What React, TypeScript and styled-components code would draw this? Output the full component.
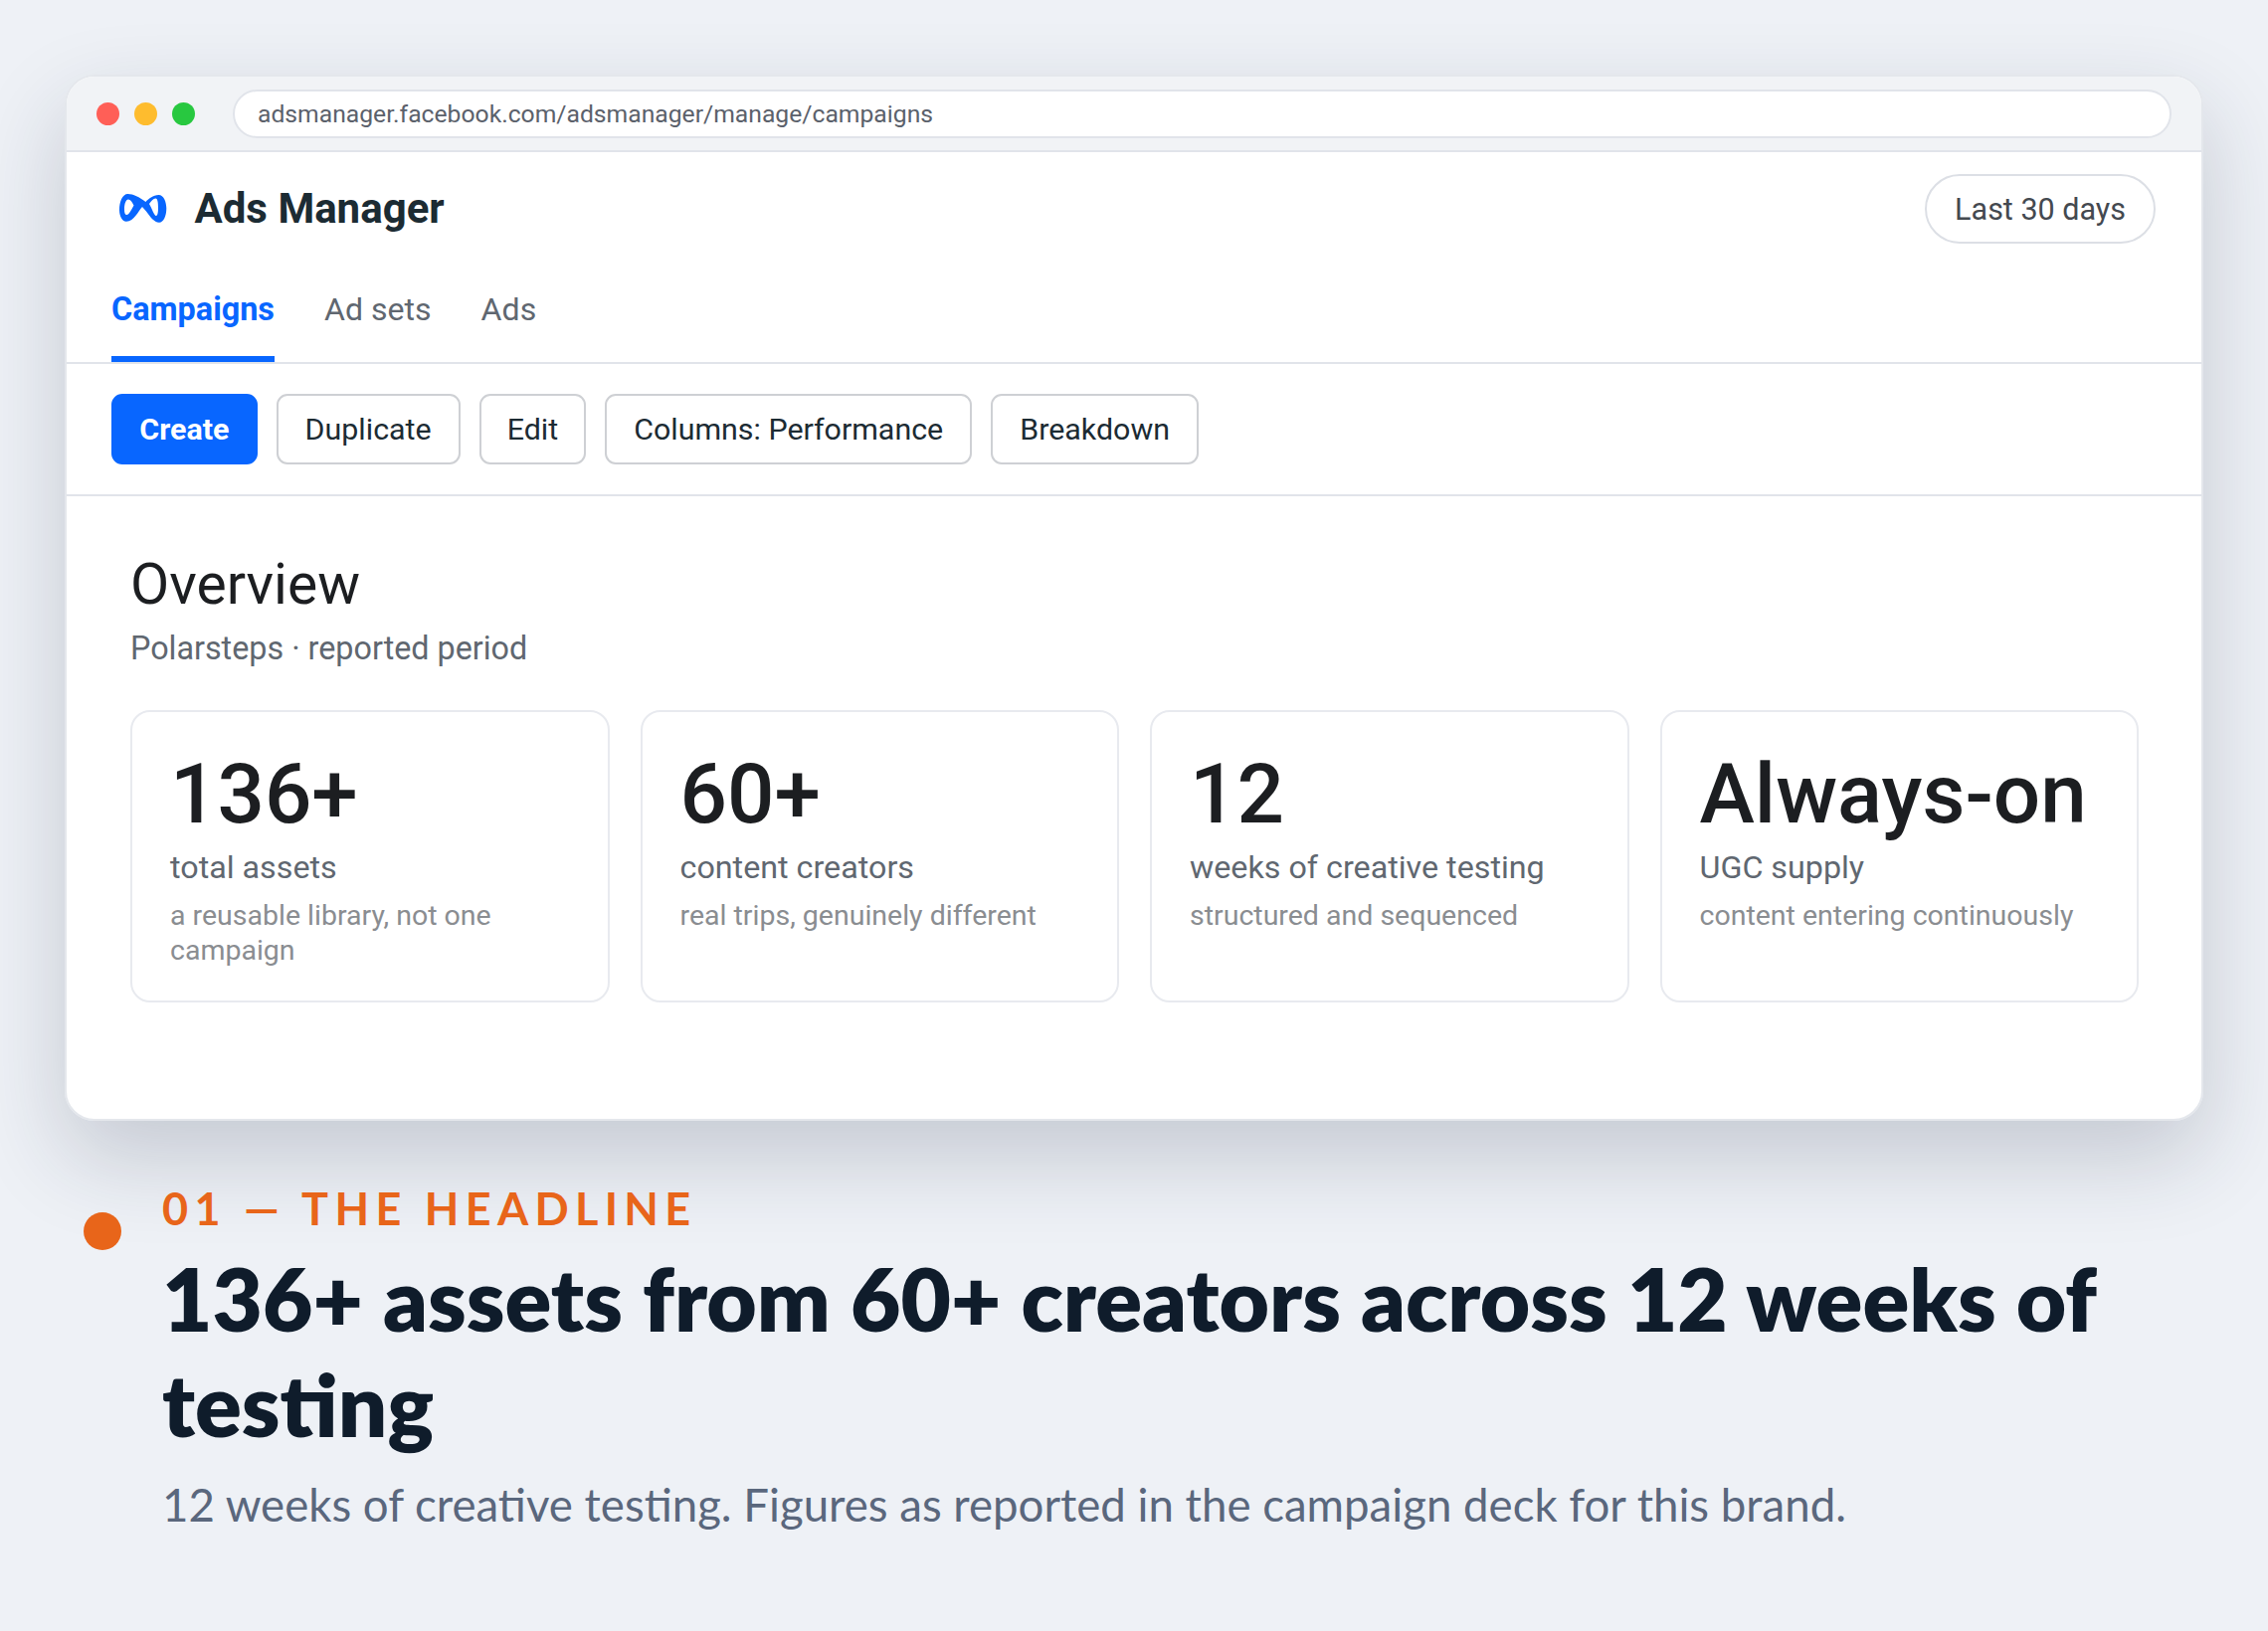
import React from "react";
import styled, { createGlobalStyle } from "styled-components";

const Global = createGlobalStyle`
  html, body { margin: 0; padding: 0; background: #eef1f6; }
  body { width: 2280px; height: 1640px; overflow: hidden; font-family: "Roboto", "Liberation Sans", sans-serif; }
  * { box-sizing: border-box; }
`;

const Page = styled.main`
  width: 2280px;
  height: 1640px;
  padding: 75px 65px 0;
  display: flex;
  flex-direction: column;
  background: #eef1f6;
`;

const Browser = styled.section`
  height: 1052px;
  background: #fff;
  border: 2px solid #e4e7ec;
  border-radius: 30px;
  overflow: hidden;
  display: flex;
  flex-direction: column;
`;

const BrowserFrame = styled.div`
  border-radius: 30px;
  box-shadow: 0 36px 90px rgba(30, 41, 66, 0.2);
`;

const ChromeBar = styled.div`
  height: 76px;
  flex: none;
  background: #f1f3f6;
  border-bottom: 2px solid #e1e4ea;
  display: flex;
  align-items: center;
  padding: 1px 30px 0;
`;

const Dots = styled.div`
  display: flex;
  gap: 15px;
  margin-right: 38px;
`;

const Dot = styled.span<{ $c: string }>`
  width: 23px;
  height: 23px;
  border-radius: 50%;
  background: ${(p) => p.$c};
`;

const UrlBar = styled.div`
  flex: 1;
  height: 49px;
  background: #fff;
  border: 2px solid #e1e4ea;
  border-radius: 25px;
  display: flex;
  align-items: center;
  padding: 0 23px;
  font-size: 24.7px;
  color: #5b616b;
`;

const Header = styled.header`
  height: 80px;
  margin-top: 17px;
  flex: none;
  display: flex;
  align-items: center;
  justify-content: space-between;
  padding: 0 46px 0 45px;
`;

const Brand = styled.div`
  display: flex;
  align-items: center;
  gap: 27.5px;
  padding: 0 0 2px 7px;
  font-size: 42px;
  font-weight: 700;
  color: #1c2b33;
`;

const RangePill = styled.div`
  height: 70px;
  padding: 0 28px;
  border: 2px solid #dcdfe5;
  border-radius: 35px;
  display: flex;
  align-items: center;
  font-size: 30.5px;
  color: #444950;
`;

const Tabs = styled.nav`
  height: 116px;
  flex: none;
  display: flex;
  gap: 50px;
  padding: 0 45px;
  border-bottom: 2px solid #e1e4ea;
`;

const Tab = styled.a<{ $active?: boolean }>`
  height: 100%;
  display: flex;
  align-items: center;
  padding-top: 14px;
  font-size: ${(p) => (p.$active ? "32.4px" : "32.1px")};
  font-weight: ${(p) => (p.$active ? 700 : 400)};
  color: ${(p) => (p.$active ? "#0866ff" : "#606770")};
  border-bottom: ${(p) => (p.$active ? "6px solid #0866ff" : "6px solid transparent")};
`;

const Toolbar = styled.div`
  height: 133px;
  flex: none;
  display: flex;
  align-items: center;
  gap: 19px;
  padding: 0 45px;
  border-bottom: 2px solid #e1e4ea;
`;

const Button = styled.button<{ $primary?: boolean; $pad?: number }>`
  height: 71px;
  padding: 0 ${(p) => p.$pad ?? 27}px;
  border-radius: 11px;
  font-family: inherit;
  font-size: 30.4px;
  font-weight: ${(p) => (p.$primary ? 700 : 400)};
  color: ${(p) => (p.$primary ? "#fff" : "#1c2b33")};
  background: ${(p) => (p.$primary ? "#0866ff" : "#fff")};
  border: 2px solid ${(p) => (p.$primary ? "#0866ff" : "#ced0d4")};
`;

const Content = styled.div`
  flex: 1;
  padding: 56px 63px 0 64px;
`;

const Title = styled.h1`
  margin: 0;
  font-size: 57px;
  line-height: 66px;
  font-weight: 400;
  color: #1c1e21;
`;

const Subtitle = styled.p`
  margin: 11px 0 0;
  font-size: 32.3px;
  line-height: 40px;
  color: #606770;
`;

const Cards = styled.div`
  display: grid;
  grid-template-columns: repeat(4, 1fr);
  gap: 31px;
  margin-top: 42px;
`;

const Card = styled.article`
  height: 294px;
  padding: 37px 38px;
  border: 2px solid #e8eaef;
  border-radius: 20px;
`;

const Value = styled.div`
  font-size: 83.5px;
  line-height: 92px;
  font-weight: 500;
  color: #1c1e21;
`;

const Label = styled.div`
  margin-top: 7px;
  font-size: 32.25px;
  line-height: 40px;
  color: #606770;
`;

const Note = styled.div`
  margin-top: 11px;
  font-size: 28.5px;
  line-height: 35px;
  color: #8a8d91;
`;

const Caption = styled.section`
  position: relative;
  margin-top: 60px;
  padding-left: 98px;
`;

const Marker = styled.span`
  position: absolute;
  left: 19px;
  top: 32px;
  width: 38px;
  height: 38px;
  border-radius: 50%;
  background: #e8651a;
`;

const Eyebrow = styled.div`
  font-family: "Lato", sans-serif;
  font-size: 45px;
  line-height: 56px;
  font-weight: 700;
  letter-spacing: 0.14em;
  color: #e8651a;
`;

const Headline = styled.h2`
  margin: 10px 0 0;
  font-family: "Lato", sans-serif;
  font-size: 87px;
  line-height: 106px;
  font-weight: 800;
  color: #0f1c2b;
`;

const Sub = styled.p`
  margin: 18px 0 0;
  font-family: "Lato", sans-serif;
  font-size: 45.6px;
  line-height: 60px;
  color: #5a677d;
`;

const MetaLogo = () => (
  <svg width="49" height="31" viewBox="0 0 49 31" aria-hidden>
    <path
      fill="#0866ff"
      fillRule="evenodd"
      d="M9.5 1C15 1 21 4 27.500 9C30 6 35 2 40.500 2C45.500 2 48.300 9 48.300 15.500C48.300 23 45.500 29.700 41 29.700C36 29.700 32 24 28 18.500L24 14C20 18 16 28.700 8 28.700C3.500 28.700 1 23 1 17C1 9 4 1 9.500 1ZM10 6.500C7.500 6.500 6 11 6 16C6 20 6.500 22 8.500 22C10.500 22 13 17 15.500 12.500C13.500 8.500 12 6.500 10 6.500ZM37.500 5.500C35 5.500 33 8 31 11C34 16 36 23 38 23C39.500 23 40 19 40 15C40 10 39.500 5.500 37.500 5.500Z"
    />
  </svg>
);

const metrics = [
  { value: "136+", label: "total assets", note: "a reusable library, not one campaign" },
  { value: "60+", label: "content creators", note: "real trips, genuinely different" },
  { value: "12", label: "weeks of creative testing", note: "structured and sequenced" },
  { value: "Always-on", label: "UGC supply", note: "content entering continuously" },
];

export default function App() {
  return (
    <Page>
      <Global />
      <BrowserFrame>
        <Browser>
          <ChromeBar>
            <Dots>
              <Dot $c="#ff5f57" />
              <Dot $c="#febc2e" />
              <Dot $c="#28c840" />
            </Dots>
            <UrlBar>adsmanager.facebook.com/adsmanager/manage/campaigns</UrlBar>
          </ChromeBar>
          <Header>
            <Brand>
              <MetaLogo />
              Ads Manager
            </Brand>
            <RangePill>Last 30 days</RangePill>
          </Header>
          <Tabs>
            <Tab $active>Campaigns</Tab>
            <Tab>Ad sets</Tab>
            <Tab>Ads</Tab>
          </Tabs>
          <Toolbar>
            <Button $primary $pad={26.25}>Create</Button>
            <Button>Duplicate</Button>
            <Button $pad={26}>Edit</Button>
            <Button>Columns: Performance</Button>
            <Button>Breakdown</Button>
          </Toolbar>
          <Content>
            <Title>Overview</Title>
            <Subtitle>Polarsteps · reported period</Subtitle>
            <Cards>
              {metrics.map((m) => (
                <Card key={m.label}>
                  <Value>{m.value}</Value>
                  <Label>{m.label}</Label>
                  <Note>{m.note}</Note>
                </Card>
              ))}
            </Cards>
          </Content>
        </Browser>
      </BrowserFrame>
      <Caption>
        <Marker />
        <Eyebrow>01 — THE HEADLINE</Eyebrow>
        <Headline>136+ assets from 60+ creators across 12 weeks of testing</Headline>
        <Sub>12 weeks of creative testing. Figures as reported in the campaign deck for this brand.</Sub>
      </Caption>
    </Page>
  );
}
